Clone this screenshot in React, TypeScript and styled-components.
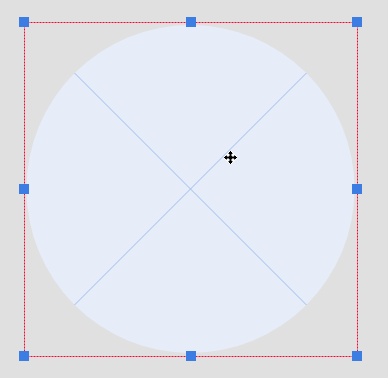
import { createGlobalStyle } from "styled-components";
import styled from "styled-components";

const GlobalStyle = createGlobalStyle`
  html, body {
    margin: 0;
    padding: 0;
    background: #e0e0e0;
    font-family: "Liberation Sans", Arial, sans-serif;
  }
`;

/**
 * Drawing surface
 */
const Stage = styled.div`
  width: 388px;
  height: 378px;
  background: #e0e0e0;
  overflow: hidden;
`;

const Drawing = styled.svg`
  display: block;
`;

const BOX = { left: 24, top: 22, right: 357, bottom: 356 };
const CENTER = { x: 190.5, y: 189 };
const RADIUS = 164;

const handlePoints = (): Array<[number, number]> => {
  const midX = 191;
  const midY = 189;
  return [
    [BOX.left, BOX.top], [midX, BOX.top], [BOX.right, BOX.top],
    [BOX.left, midY], [BOX.right, midY],
    [BOX.left, BOX.bottom], [midX, BOX.bottom], [BOX.right, BOX.bottom],
  ];
};

/**
 * Four-way move cursor
 */
const MoveCursor = ({ x, y }: { x: number; y: number }) => (
  <g transform={`translate(${x} ${y})`}>
    <path
      d="M0 -7 L3.5 -3.5 L1.5 -3.5 L1.5 -1.5 L3.5 -1.5 L3.5 -3.5 L7 0 L3.5 3.5 L3.5 1.5 L1.5 1.5 L1.5 3.5 L3.5 3.5 L0 7 L-3.5 3.5 L-1.5 3.5 L-1.5 1.5 L-3.5 1.5 L-3.5 3.5 L-7 0 L-3.5 -3.5 L-3.5 -1.5 L-1.5 -1.5 L-1.5 -3.5 L-3.5 -3.5 Z"
      fill="#000"
      stroke="#fff"
      strokeWidth="1"
      strokeLinejoin="miter"
    />
  </g>
);

const App = (): JSX.Element => {
  const d = RADIUS / Math.SQRT2;
  const l = BOX.left + 0.5;
  const t = BOX.top + 0.5;
  const r = BOX.right + 0.5;
  const b = BOX.bottom + 0.5;
  const edges = [
    [l, t, r, t],
    [r, t, r, b],
    [l, b, r, b],
    [l, t, l, b],
  ];

  return (
    <Stage>
      <GlobalStyle />
      <Drawing width="388" height="378" viewBox="0 0 388 378">
        <circle cx={CENTER.x} cy={CENTER.y} r={RADIUS} fill="#e6edf9" />
        <line x1={CENTER.x - d} y1={CENTER.y - d} x2={CENTER.x + d} y2={CENTER.y + d} stroke="#9dbcf0" strokeWidth="1" />
        <line x1={CENTER.x + d} y1={CENTER.y - d} x2={CENTER.x - d} y2={CENTER.y + d} stroke="#9dbcf0" strokeWidth="1" />
        {edges.map(([x1, y1, x2, y2], i) => (
          <line key={i} x1={x1} y1={y1} x2={x2} y2={y2} stroke="#ff0033" strokeWidth="1" strokeDasharray="2 1" />
        ))}
        {handlePoints().map(([hx, hy], i) => (
          <rect key={i} x={hx - 5} y={hy - 5} width="10" height="10" fill="#3b7de3" />
        ))}
        <MoveCursor x={230.5} y={157.5} />
      </Drawing>
    </Stage>
  );
};

export default App;
